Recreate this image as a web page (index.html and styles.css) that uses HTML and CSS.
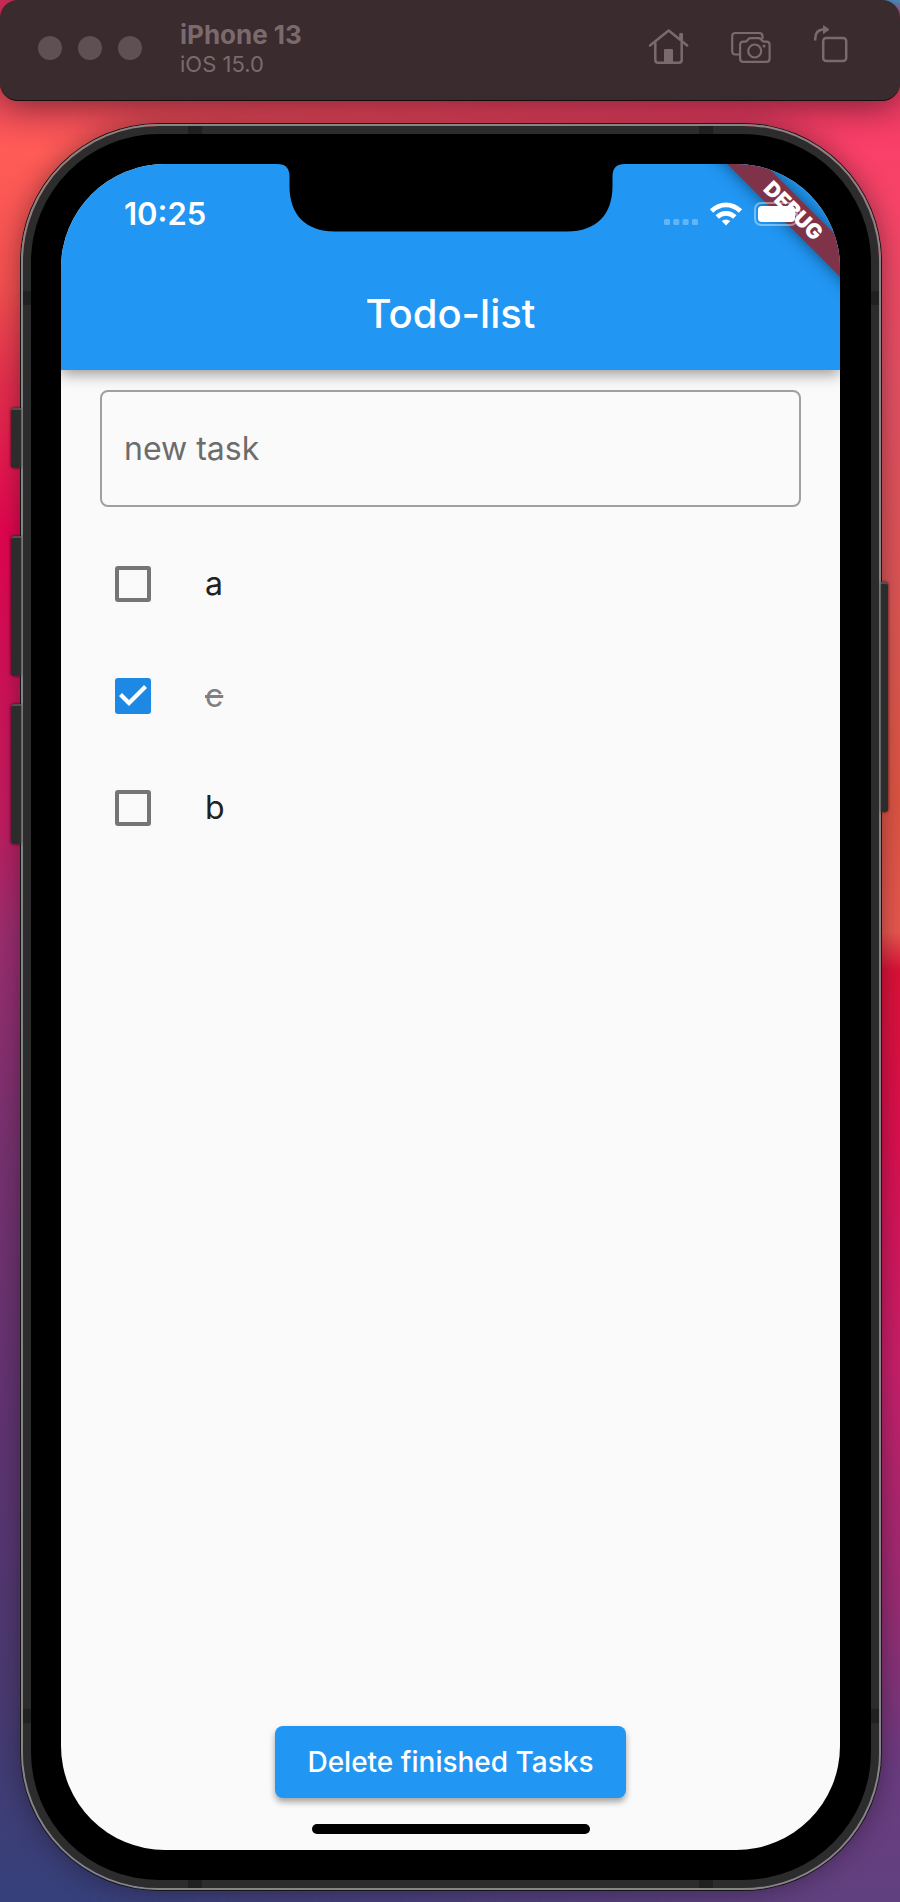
FILE: index.html
```html
<!DOCTYPE html>
<html lang="en">
<head>
<meta charset="utf-8">
<meta name="viewport" content="width=device-width, initial-scale=1">
<title>Todo-list</title>
<link rel="stylesheet" href="styles.css">
</head>
<body>
<header class="toolbar">
  <div class="lights"><span class="light"></span><span class="light"></span><span class="light"></span></div>
  <div class="device">
    <strong class="device-name">iPhone 13</strong>
    <span class="device-os">iOS 15.0</span>
  </div>
  <div class="tools">
    <button class="tool" type="button" aria-label="Home">
      <svg width="42" height="40" viewBox="0 0 42 40" fill="none" stroke="currentColor" stroke-width="2.5" stroke-linecap="round" stroke-linejoin="round">
        <path d="M2 17.5 20.7 2.5 39.2 17.5M7.3 14.5V32Q7.3 34.7 10 34.7H31Q33.7 34.7 33.7 32V14.5"/>
        <path d="M16 34.5V22q0-1 1-1h7q1 0 1 1v12.500zM31.200 10.500V6q0-1 1-1h1.800q1 0 1 1v7.500z" fill="currentColor" stroke="none"/>
      </svg>
    </button>
    <button class="tool" type="button" aria-label="Screenshot">
      <svg width="42" height="40" viewBox="0 0 42 40" fill="none" stroke="currentColor" stroke-width="2.2" stroke-linejoin="round">
        <path d="M9.500 26.500H5.500Q2.200 26.500 2.200 23.200V8.300Q2.200 5 5.500 5H29.200Q32.500 5 32.500 8.300V11"/>
        <path d="M13.300 13.600H15.200Q16.300 13.600 17.200 12.500L18.300 11.200Q19.200 10.200 20.500 10.200H28.700Q30 10.200 30.900 11.200L32 12.500Q32.900 13.600 34 13.600H36.400Q39.600 13.600 39.600 16.800V30.700Q39.600 33.900 36.400 33.900H13.300Q10.100 33.900 10.100 30.700V16.800Q10.100 13.600 13.300 13.600Z"/>
        <circle cx="24.700" cy="23" r="6.500"/>
        <circle cx="34" cy="18" r="1.500" fill="currentColor" stroke="none"/>
      </svg>
    </button>
    <button class="tool" type="button" aria-label="Rotate">
      <svg class="tool-rotate" width="36" height="40" viewBox="0 0 36 40" fill="none" stroke="currentColor" stroke-width="2.500">
        <rect x="11.200" y="10" width="23" height="23" rx="3"/>
        <path d="M3.200 12.500V10.500Q3.500 2 11 1.500"/>
        <path d="M11.500-2.300 17 1.500 11.500 5.500Z" fill="currentColor" stroke-width="1" stroke-linejoin="round"/>
      </svg>
    </button>
  </div>
</header>

<main class="phone">
  <span class="key key-mute"></span>
  <span class="key key-up"></span>
  <span class="key key-down"></span>
  <span class="key key-power"></span>
  <div class="band">
    <div class="bezel">
      <div class="screen">
        <header class="appbar">
          <div class="status">
            <time class="clock">10:25</time>
            <div class="signals">
              <svg width="34" height="24" viewBox="0 0 34 24" fill="#fff" fill-opacity=".3">
                <rect y="17" width="6" height="6" rx="1.500"/><rect x="9.300" y="17" width="6" height="6" rx="1.500"/><rect x="18.600" y="17" width="6" height="6" rx="1.500"/><rect x="28" y="17" width="6" height="6" rx="1.500"/>
              </svg>
              <svg width="34" height="24" viewBox="0 0 34 24" fill="none" stroke="#fff" stroke-width="4.800">
                <path d="M2.500 9Q9 2.800 17 2.800T31.500 9"/>
                <path d="M8.200 15Q12 11.300 17 11.300T25.800 15"/>
                <path d="M17 23.500 12.700 19Q17 15.800 21.300 19Z" fill="#fff" stroke="none"/>
              </svg>
              <svg width="49" height="24" viewBox="0 0 49 24">
                <rect x="1" y="1" width="42" height="22" rx="6" fill="none" stroke="#fff" stroke-opacity=".4" stroke-width="2"/>
                <rect x="4" y="4" width="37" height="16" rx="4" fill="#fff"/>
                <path d="M45.500 8Q48 9 48 12T45.500 16Z" fill="#fff" fill-opacity=".4"/>
              </svg>
            </div>
          </div>
          <h1 class="title">Todo-list</h1>
          <div class="ribbon">DEBUG</div>
          <svg class="notch" width="348" height="68" viewBox="0 0 348 68"><path d="M0 0C9 0 12.500 4 12.500 13V22C12.500 50 28 67.500 58 67.500H290C320 67.500 335.500 50 335.500 22V13C335.500 4 339 0 348 0Z"/></svg>
        </header>
        <section class="content">
          <input class="new-task" type="text" placeholder="new task" aria-label="new task">
          <ul class="tasks">
            <li><label class="task"><input class="check" type="checkbox"><span class="task-name">a</span></label></li>
            <li><label class="task"><input class="check" type="checkbox" checked><span class="task-name">c</span></label></li>
            <li><label class="task"><input class="check" type="checkbox"><span class="task-name">b</span></label></li>
          </ul>
        </section>
        <footer class="footer">
          <button class="delete" type="button">Delete finished Tasks</button>
          <span class="indicator"></span>
        </footer>
      </div>
    </div>
  </div>
</main>
</body>
</html>
```

FILE: styles.css
```css
* { box-sizing: border-box; }

body {
  margin: 0;
  min-height: 100vh;
  display: flex;
  flex-direction: column;
  position: relative;
  isolation: isolate;
  font-family: Inter, "Liberation Sans", sans-serif;
  background: linear-gradient(#4a9bd0 0, #e8365f 1%, #fa4068 8%, #e45063 20%, #da5650 34%, #dd5443 42%, #e9584f 49%, #dc1238 51%, #dc1050 60%, #c8206a 72%, #9a2c72 84%, #6a3c80 93%, #61407f 100%);
}

body::before {
  content: "";
  position: absolute;
  inset: 0;
  z-index: -2;
  background: linear-gradient(#e03060 0, #ff5c57 8%, #f2504f 15%, #e32f4d 20%, #e30550 28%, #cf1257 36%, #c01c5e 43%, #9c2d6f 49%, #78326f 60%, #603472 75%, #4b3a70 88%, #35407a 100%);
  -webkit-mask-image: linear-gradient(to right, #000 8%, transparent 90%);
  mask-image: linear-gradient(to right, #000 8%, transparent 90%);
}

.toolbar {
  display: flex;
  align-items: center;
  height: 101px;
  padding: 0 52px 5px 38px;
  border-radius: 18px;
  border-bottom: 1px solid #160d0f;
  background: #3a2b2e;
  color: #7b6a6d;
  box-shadow: 0 4px 36px rgba(30, 10, 20, .6);
}

.lights { display: flex; gap: 16px; }
.light { width: 24px; height: 24px; border-radius: 50%; background: #5f5053; }

.device { display: flex; flex-direction: column; margin-left: 38px; padding-top: 2px; }
.device-name { font-size: 26px; line-height: 30px; font-weight: 700; }
.device-os { font-size: 22px; line-height: 28px; }

.tools { display: flex; gap: 40px; margin-left: auto; }
.tool { display: flex; padding: 0; border: 0; background: none; color: inherit; }
.tool-rotate { overflow: visible; }

.phone {
  flex: 1;
  display: flex;
  position: relative;
  margin: 23px 19px 12px 21px;
  border: 2px solid #858585;
  border-radius: 138px;
  box-shadow: 0 0 0 1px #171717, 0 0 26px rgba(20, 10, 20, .45);
}

.key {
  position: absolute;
  left: -12px;
  width: 10px;
  height: 140px;
  border-radius: 3px 0 0 3px;
  background: #2c2c2c;
  box-shadow: 0 0 3px rgba(0, 0, 0, .7);
  border-top: 2px solid #505050;
}
.key-mute { top: 282px; height: 60px; }
.key-up { top: 410px; }
.key-down { top: 578px; }
.key-power { top: 456px; left: auto; right: -9px; width: 7px; height: 230px; border-radius: 0 3px 3px 0; }

.band {
  flex: 1;
  display: flex;
  position: relative;
  padding: 8px;
  border-radius: 136px;
  background:
    linear-gradient(#202020, #202020) 165px 0 / 14px 100% no-repeat,
    linear-gradient(#202020, #202020) right 166px top 0 / 14px 100% no-repeat,
    linear-gradient(#202020, #202020) 0 165px / 100% 14px no-repeat,
    linear-gradient(#202020, #202020) left 0 bottom 165px / 100% 14px no-repeat,
    #2c2c2c;
}

.bezel { flex: 1; display: flex; padding: 30px 31px 30px 30px; border-radius: 128px; background: #000; }

.screen {
  flex: 1;
  min-width: 0;
  display: flex;
  flex-direction: column;
  overflow: hidden;
  border-radius: 104px;
  background: #fafafa;
}

.appbar {
  position: relative;
  color: #fff;
  background: #2196f3;
  box-shadow: 0 4px 14px rgba(0, 0, 0, .4);
}

.status {
  position: relative;
  z-index: 2;
  display: flex;
  align-items: center;
  justify-content: space-between;
  height: 94px;
  padding: 6px 37px 0 63px;
}
.clock { font-size: 31px; line-height: 36px; font-weight: 600; }
.signals { display: flex; align-items: center; gap: 11px; }

.title { margin: 0; font-size: 40px; line-height: 112px; font-weight: 500; text-align: center; }

.ribbon {
  position: absolute;
  top: 34px;
  right: -53px;
  z-index: 1;
  width: 200px;
  transform: rotate(45deg);
  background: #7f3348;
  box-shadow: 0 0 16px rgba(0, 0, 0, .5);
  font-size: 21px;
  line-height: 26px;
  font-weight: 900;
  text-align: center;
}

.notch { position: absolute; top: 0; left: 50%; transform: translateX(-50%); }

.content { flex: 1; padding: 20px 39px; }

.new-task {
  display: block;
  width: 100%;
  height: 117px;
  padding: 0 22px;
  border: 2px solid #a0a0a0;
  border-radius: 8px;
  background: transparent;
  color: #212121;
  font: 400 32px/40px Inter, "Liberation Sans", sans-serif;
}
.new-task::placeholder { color: #6c6c6c; opacity: 1; }

.tasks { margin: 21px 0 0; padding: 0; list-style: none; }

.task { display: flex; align-items: center; gap: 54px; height: 112px; padding-left: 15px; }
.task-name { font-size: 32px; line-height: 40px; color: #212121; }

.check {
  appearance: none;
  width: 36px;
  height: 36px;
  margin: 0;
  border: 4px solid #757575;
  border-radius: 3px;
}
.check:checked {
  display: grid;
  place-items: center;
  border-color: #1e88e5;
  background: #1e88e5;
}
.check:checked::before {
  content: "";
  width: 28px;
  height: 28px;
  background: #fff;
  clip-path: polygon(0 14px, 3px 11px, 10px 18px, 25px 3px, 28px 6px, 10px 24px);
}
.check:checked + .task-name { color: #808080; text-decoration: line-through; }

.footer { display: flex; flex-direction: column; align-items: center; gap: 26px; padding-bottom: 16px; }

.delete {
  height: 72px;
  padding: 0 32px;
  border: 0;
  border-radius: 8px;
  background: #2196f3;
  color: #fff;
  box-shadow: 0 4px 6px rgba(0, 0, 0, .35);
  font: 500 28px/36px Inter, "Liberation Sans", sans-serif;
}

.indicator { width: 278px; height: 10px; border-radius: 5px; background: #000; }
```
